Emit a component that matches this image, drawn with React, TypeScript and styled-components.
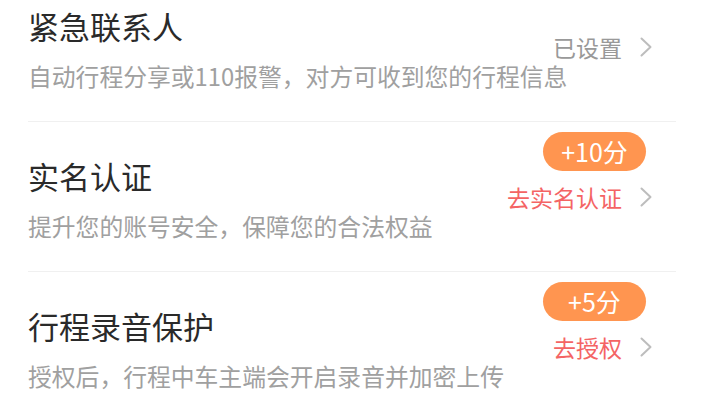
import React from 'react'
import styled, { createGlobalStyle } from 'styled-components'


interface Item {
  title: string
  desc: string
  action: string
  done?: boolean
  bonus?: string
}


const items: Item[] = [
  {
    title: '紧急联系人',
    desc: '自动行程分享或110报警，对方可收到您的行程信息',
    action: '已设置',
    done: true,
  },
  {
    title: '实名认证',
    desc: '提升您的账号安全，保障您的合法权益',
    action: '去实名认证',
    bonus: '+10分',
  },
  {
    title: '行程录音保护',
    desc: '授权后，行程中车主端会开启录音并加密上传',
    action: '去授权',
    bonus: '+5分',
  },
]


const GlobalStyle = createGlobalStyle`
  html, body {
    margin: 0;
    padding: 0;
    background: #fff;
  }
  body {
    font-family: 'Noto Sans CJK SC', 'Noto Sans', sans-serif;
    overflow: hidden;
  }
`


const Chevron = () => (
  <svg width="12" height="20" viewBox="0 0 12 20">
    <polyline
      points="1.5,1.5 10.5,10 1.5,18.5"
      fill="none"
      stroke="#bdbdbd"
      strokeWidth="2"
      strokeLinecap="round"
      strokeLinejoin="round"
    />
  </svg>
)


export default function App() {
  return (
    <>
      <GlobalStyle />
      <List>
        {items.map((item) => (
          <Row key={item.title}>
            <Info>
              <Title>{item.title}</Title>
              <Desc>{item.desc}</Desc>
            </Info>
            <Action>
              {item.bonus && <Bonus>{item.bonus}</Bonus>}
              <ActionText done={item.done}>{item.action}</ActionText>
              <Chevron />
            </Action>
          </Row>
        ))}
      </List>
    </>
  )
}


const List = styled.div`
  margin: -28px 52px 0 28px;
`


const Row = styled.div`
  display: flex;
  align-items: center;
  justify-content: space-between;
  box-sizing: border-box;
  height: 150px;
  padding-right: 24px;
  border-bottom: 1px solid #f0f0f0;
`


const Info = styled.div`
  display: flex;
  flex-direction: column;
  gap: 10px;
  margin-top: 8px;
  min-width: 0;
`


const Title = styled.div`
  font-size: 31px;
  line-height: 40px;
  color: #2a2a2a;
`


const Desc = styled.div`
  font-size: 23.8px;
  line-height: 40px;
  color: #a0a0a0;
  white-space: nowrap;
`


const Action = styled.div`
  position: relative;
  flex-shrink: 0;
  display: flex;
  align-items: center;
  gap: 18px;
`


const ActionText = styled.span<{ done?: boolean }>`
  font-size: 23px;
  line-height: 34px;
  white-space: nowrap;
  color: ${({ done }) => (done ? '#999' : '#f46464')};
`


const Bonus = styled.div`
  position: absolute;
  right: 6px;
  bottom: calc(100% + 9px);
  width: 103px;
  height: 39px;
  border-radius: 20px;
  background: #ff9550;
  color: #fff;
  font-size: 25px;
  line-height: 39px;
  text-align: center;
  white-space: nowrap;
`
